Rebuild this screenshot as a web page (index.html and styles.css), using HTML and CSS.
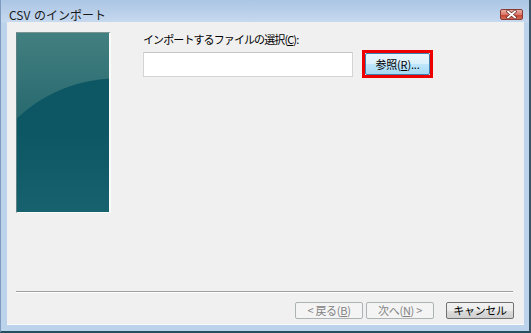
FILE: index.html
```html
<!DOCTYPE html>
<html>
<head>
    <title>CSV のインポート</title>
    <link rel="stylesheet" href="styles.css">
</head>
<body>
    <div class="window">
        <div class="titlebar">
            <span class="title">CSV のインポート</span>
            <span class="close">
                <svg width="11" height="9" viewBox="0 0 11 9">
                    <path d="M2 1.5 L9 7.5 M9 1.5 L2 7.5" stroke="#6b2b26" stroke-width="3.2" stroke-linecap="square"/>
                    <path d="M2 1.5 L9 7.5 M9 1.5 L2 7.5" stroke="#ffffff" stroke-width="1.8" stroke-linecap="square"/>
                </svg>
            </span>
        </div>
        <div class="client">
            <div class="top">
                <div class="banner"></div>
                <div class="form">
                    <label class="label">インポートするファイルの選択(<u>C</u>):</label>
                    <div class="row">
                        <input class="path" type="text">
                        <div class="highlight">
                            <button class="browse">参照(<u>R</u>)...</button>
                        </div>
                    </div>
                </div>
            </div>
            <div class="sep"></div>
            <div class="buttons">
                <button class="btn" disabled>&lt; 戻る(<u>B</u>)</button>
                <button class="btn next" disabled>次へ(<u>N</u>) &gt;</button>
                <button class="btn cancel">キャンセル</button>
            </div>
        </div>
    </div>
</body>
</html>
```

FILE: styles.css
```css
body {
    margin: 0;
    font-family: "Noto Sans CJK JP", sans-serif;
    font-size: 11px;
    background: #23505e;
}
.window {
    width: 531px;
    height: 333px;
    box-sizing: border-box;
    border-left: 1px solid #7e9bbf;
    border-right: 2px solid #3a5566;
    border-bottom: 2px solid #23505e;
    background: linear-gradient(#abc5e4, #c6d9ef 22px, #bcd3ec 23px);
    display: flex;
    flex-direction: column;
}
.titlebar {
    height: 22px;
    box-sizing: border-box;
    padding: 6px 6px 0 8px;
    display: flex;
    align-items: center;
    justify-content: space-between;
}
.title {
    font-size: 12px;
    color: #1a1a1a;
    word-spacing: 1px;
}
.close {
    width: 23px;
    height: 11px;
    box-sizing: border-box;
    border: 1px solid #8a3a33;
    border-radius: 2px;
    background: linear-gradient(#eab2a5, #d9786a 50%, #c2402f 51%, #d36a55);
    display: flex;
    align-items: center;
    justify-content: center;
}
.client {
    margin: 0 5px 0 6px;
    height: 303px;
    background: #f0f0f0;
    border-bottom: 1px solid #fafafa;
    box-sizing: border-box;
    display: flex;
    flex-direction: column;
}
.top {
    flex: 1;
    display: flex;
    padding: 10px 0 0 9px;
}
.banner {
    width: 95px;
    height: 181px;
    box-sizing: border-box;
    border-top: 1px solid #7d9495;
    border-left: 1px solid #5d8084;
    border-right: 2px solid #fbfbfb;
    border-bottom: 1px solid #fbfbfb;
    background:
        linear-gradient(rgba(40, 120, 130, 0) 55%, rgba(40, 120, 130, 0.35)),
        radial-gradient(circle 146px at 100px 191px, #0d5663 0 145px, transparent 146px),
        linear-gradient(#427f80, #2c6d72 40%, #1d6068);
}
.form {
    margin-left: 32px;
}
.label {
    display: block;
    height: 14px;
    line-height: 14px;
    margin-bottom: 4px;
    color: #000;
    letter-spacing: -0.9px;
}
.row {
    display: flex;
    align-items: center;
}
.path {
    width: 210px;
    height: 25px;
    box-sizing: border-box;
    margin: 0;
    border: 1px solid #d4d4d4;
    border-top-color: #c6c6c6;
    background: #fff;
}
.highlight {
    margin-left: 9px;
    border: 3px solid #ee0000;
    width: 71px;
    height: 28px;
    box-sizing: border-box;
}
.browse {
    width: 65px;
    height: 22px;
    margin: 0;
    padding: 0;
    border: 1px solid #3c7fb1;
    border-radius: 2px;
    background: linear-gradient(#eaf6fd, #d9f0fc 50%, #bee6fd 51%, #a7d9f5);
    font-family: inherit;
    font-size: 11px;
    color: #000;
    letter-spacing: -0.2px;
}
.sep {
    margin: 0 11px 0 9px;
    height: 1px;
    background: #a0a0a0;
    border-bottom: 1px solid #ffffff;
}
.buttons {
    display: flex;
    justify-content: flex-end;
    padding: 9px 10px 5px 0;
}
.btn {
    width: 68px;
    height: 17px;
    margin: 0;
    padding: 0;
    box-sizing: border-box;
    font-family: inherit;
    font-size: 11px;
    line-height: 15px;
    border: 1px solid #adb2b5;
    border-radius: 2px;
    background: #f4f4f4;
    color: #838383;
    letter-spacing: -0.3px;
}
.next {
    margin-left: 3px;
}
.cancel {
    margin-left: 12px;
    border-color: #707070;
    background: linear-gradient(#f2f2f2, #ebebeb 50%, #dddddd 51%, #cfcfcf);
    color: #000;
}
```
